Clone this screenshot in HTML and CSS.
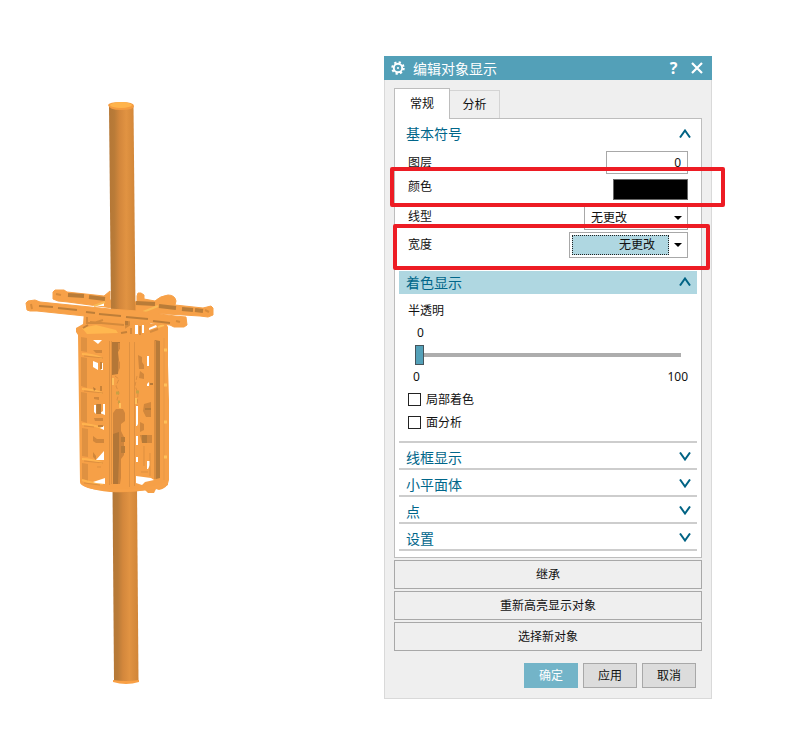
FILE: index.html
```html
<!DOCTYPE html>
<html lang="zh-CN">

<head>
    <meta charset="utf-8">
    <title>编辑对象显示</title>
    <link rel="stylesheet" href="styles.css">
</head>
<body>
    <div class="workspace">
        <div class="viewport">
            <svg class="model" viewBox="0 0 384 744" aria-hidden="true">
                <defs>
                    <linearGradient id="pole">
                        <stop offset="0" stop-color="#b47736"/>
                        <stop offset="0.2" stop-color="#b97b38"/>
                        <stop offset="0.4" stop-color="#d3873c"/>
                        <stop offset="0.65" stop-color="#e19342"/>
                        <stop offset="1" stop-color="#d08538"/>
                    </linearGradient>
                </defs>

                <!-- lower pole -->
                <path d="M112.5 486L137 486L138.5 681L114 681Z" fill="url(#pole)"/>
                <path d="M113 680Q126 682 139 680L139 682Q126 686 113 682Z" fill="#f9a045"/>

                <!-- back arm -->
                <path d="M55 290L64 290L67 292L104 296L110 291V300L137 302L137 296L138 293L141 293L144 295L144 299L155 301Q160 296 168 295Q175 295 176 301L175 305L203 308L211 306L213 308L213 315L208 317L200 316L150 313L68 302L58 301L53 299L53 292Z" fill="#f7a148" stroke="#f7a148"/>
                <path d="M68 295L84 296M89 297L105 299M136 303L155 304M159 306L176 308M182 309L193 310" stroke="#b97c38" stroke-width="4"/>
                <path d="M195 310L203 311" stroke="#bd7e39" stroke-width="4"/>
                <path d="M93 306L104 302V306Z" fill="#fff"/>
                <path d="M94 306L105 302M143 312L158 306" stroke="#f9bb55" stroke-width="2"/>

                <!-- cage shell -->
                <path d="M84 312L137 311L151 324L165 322L168 327V365L169 400V480Q168 488 159 490L156 489L154 493H148L145 490Q132 493 110 492Q83 489 80 482L78 335L76 332V328L83 324Z" fill="#f6a047"/>

                <!-- hub and top plates -->
                <path d="M82 328L96 325L116 330L118 333L87 334Z" fill="#ffb74f"/>
                <path d="M87 317V323L94 323L103 320M126 319V327L129 325V318M90 322L124 325" stroke="#d48a3c" stroke-width="2" fill="none"/>
                <path d="M125 319H128V325H125Z" fill="#b97b38"/>
                <path d="M83 328L88 325M121 333L127 332" stroke="#c58139" stroke-width="2"/>
                <path d="M135 325H138V334H135ZM142 325H144V333H142ZM149 328L156 325L157 327L149 330Z" fill="#fff"/>
                <path d="M140 326V335M150 332L158 329M131 328V334" stroke="#d68b3d" stroke-width="2"/>
                <path d="M158 327L164 325" stroke="#ffc05a" stroke-width="2"/>

                <!-- left wall panels -->
                <g fill="#df9141">
                    <path d="M81 337L87 338V352L81 351ZM81 357L87 358V388L81 386ZM81 392L87 393V423L81 421ZM82 428L88 429V457L82 456ZM82 463L88 464V482L82 479Z"/>
                    <path d="M109 341H110V485H109ZM129 342H130V487H129ZM111 341H112V484H111ZM134 342H135V486H134Z"/>
                </g>
                <g stroke="#ffb44f" stroke-width="2" fill="none">
                    <path d="M82 354Q91 354 102 358M82 389Q91 389 102 393M82 424Q90 424 102 428M82 459Q91 459 102 463M82 480Q91 483 103 484"/>
                </g>
                <path d="M84 356L103 358M84 391L103 393M84 426L94 427M84 461L103 463M84 483L100 485" stroke="#dc8f40" stroke-width="1"/>

                <!-- pole and fittings seen through the front -->
                <path d="M112 342H120V348L118 352L119 362L118 374L112 375Z" fill="#b47737"/>
                <path d="M118 343H120V348L118 351ZM118 360L120 362V368L118 372Z" fill="#d1863d"/>
                <path d="M113 413L116 409H123L125 413V421L121 424V431L124 437V455L121 459V478L120 484H113Z" fill="#cf853c"/>
                <path d="M113 434L119 432V456L118 484H113Z" fill="#b27637"/>
                <path d="M121 437H125V442H121ZM121 446H125V453H121Z" fill="#b87b38"/>
                <path d="M115 376L119 379L116 386L119 393L117 400L120 406M137 376L135 386L138 393L137 407" stroke="#dc8e3f" stroke-dasharray="4 2" fill="none"/>
                <path d="M116 393H119M136 392H139M118 402H120" stroke="#c8a044" stroke-width="3"/>
                <path d="M113 378V385M120 403V408M136 398V404" stroke="#ffc15c" stroke-width="2"/>

                <!-- openings in the cage -->
                <g fill="#fff">
                    <path d="M93 340H102L98 344ZM93 361L98 363V370L93 367ZM102 363H103V370H101Z"/>
                    <path d="M94 405H96V414L94 412ZM103 404H105V415L100 413L103 411Z"/>
                    <path d="M100 428L104 426V430ZM96 460L104 451V460ZM93 482L105 478V484L96 483Z"/>
                    <path d="M147 356H149V366H147ZM147 384L149 382V386H147Z"/>
                    <path d="M136 406H138V424L137 426H136ZM136 436H138V445H136ZM136 457H138V462H136ZM147 461H150V465L148 469H147Z"/>
                    <path d="M136 476L151 478L154 480L145 482L142 485L136 483Z"/>
                </g>

                <path d="M101 362V369M97 404V414M101 386V391M98 426H103" stroke="#c98339" stroke-width="2"/>
                <g fill="#d1873c">
                    <path d="M93 350H102V353H96ZM94 397H99V400L94 399ZM94 418H103V421H95ZM93 436L97 439H104V443H96L93 441ZM93 452L96 456V460L93 457Z"/>
                    <path d="M138 355L142 357V362L144 365V369H139ZM140 371L144 374V379L139 378ZM144 404L151 402V417H146L143 411ZM140 422L144 424V430L140 432ZM140 435H152V443H142Z"/>
                </g>
                <path d="M97 404H101V414H97ZM145 408H151V410H145ZM142 435H147V443H142ZM93 387L96 389L94 391Z" fill="#b67a38"/>
                <path d="M144 446V466M150 453V476M97 467H101M141 472H148" stroke="#dd8f40"/>
                <path d="M150 384H153" stroke="#b67a38" stroke-width="2"/>

                <!-- right wall -->
                <path d="M155 340L160 341V478L156 479Z" fill="#b77b39"/>
                <path d="M154 340L156 341V479H154Z" fill="#d98d3f"/>
                <path d="M164 338V480" stroke="#e89846"/>
                <path d="M164 350H167M164 385H167M164 422H167M164 457H167" stroke="#ffc05a" stroke-width="3"/>
                <path d="M80 482Q91 489 120 489Q154 489 168 480V485Q156 492 120 491Q85 491 80 483Z" fill="#f7a148"/>

                <!-- upper pole -->
                <path d="M109 106L133.5 106L135.5 311L111 311Z" fill="url(#pole)"/>
                <path d="M108 105Q109 102 121 102Q134 102 134 106Q134 110 121 110Q109 110 108 105Z" fill="#f59b3f"/>
                <ellipse cx="121" cy="105" rx="11" ry="3" fill="#ffb44c"/>

                <!-- front arm -->
                <path d="M28 301L35 300L40 302L110 309L137 311L175 316L186 317L187 325L184 327L174 327L170 325L85 316L37 311L30 311L27 310L26 303Z" fill="#f7a148" stroke="#f7a148"/>
                <path d="M39 306L53 307M58 308L77 310M86 312L95 313M99 314L121 316M126 317L148 319M153 321L170 323" stroke="#be7e38" stroke-width="2"/>
                <path d="M31 304L32 309M176 321L180 322M56 294L61 295M205 310L209 312" stroke="#d78b3b" stroke-width="2"/>
            </svg>
        </div>

        <form class="dialog">
            <div class="titlebar">
                <svg class="gear" viewBox="0 0 16 16" aria-hidden="true">
                    <circle cx="8" cy="8" r="6.5" fill="none" stroke="#fff" stroke-width="2.4" stroke-dasharray="2.55 2.55"/>
                    <circle cx="8" cy="8" r="4.8" fill="none" stroke="#fff" stroke-width="2.2"/>
                    <circle cx="8" cy="8" r="1.2" fill="#fff"/>
                </svg>
                <h1>编辑对象显示</h1>
                <button type="button" class="title-btn help" aria-label="帮助">?</button>
                <button type="button" class="title-btn" aria-label="关闭">
                    <svg width="12" height="12" viewBox="0 0 12 12"><path d="M1 1L11 11M11 1L1 11" stroke="#fff" stroke-width="2.2"/></svg>
                </button>
            </div>

            <div class="dialog-body">
                <div class="tabs">
                    <button type="button" class="tab active">常规</button>
                    <button type="button" class="tab">分析</button>
                </div>

                <div class="panel">
                    <button type="button" class="section">基本符号
                        <svg class="chevron" viewBox="0 0 12 9"><path d="M1 8.500L6 1.500L11 8.500"/></svg>
                    </button>
                    <div class="fields">
                        <div class="row">
                            <label for="layer">图层</label>
                            <input type="text" id="layer" class="layer" value="0">
                        </div>
                        <div class="row row-color">
                            <label for="color">颜色</label>
                            <button type="button" id="color" class="swatch"></button>
                            <span class="mark mark-color"></span>
                        </div>
                        <div class="row">
                            <label for="line">线型</label>
                            <div class="combo combo-line">
                                <select id="line"><option>无更改</option></select>
                                <span class="arrow"></span>
                            </div>
                        </div>
                        <div class="row row-width">
                            <label for="width">宽度</label>
                            <div class="combo combo-width">
                                <select id="width"><option>无更改</option></select>
                                <span class="arrow"></span>
                            </div>
                            <span class="mark mark-width"></span>
                        </div>
                    </div>

                    <button type="button" class="section selected">着色显示
                        <svg class="chevron" viewBox="0 0 12 9"><path d="M1 8.500L6 1.500L11 8.500"/></svg>
                    </button>
                    <div class="shading">
                        <label for="alpha">半透明</label>
                        <output for="alpha">0</output>
                        <input type="range" id="alpha" class="slider" min="0" max="100" value="0">
                        <div class="scale"><span>0</span><span>100</span></div>
                        <label class="check"><input type="checkbox">局部着色</label>
                        <label class="check"><input type="checkbox">面分析</label>
                    </div>

                    <button type="button" class="section closed">线框显示
                        <svg class="chevron" viewBox="0 0 12 9"><path d="M1 0.500L6 7.500L11 0.500"/></svg>
                    </button>
                    <button type="button" class="section closed">小平面体
                        <svg class="chevron" viewBox="0 0 12 9"><path d="M1 0.500L6 7.500L11 0.500"/></svg>
                    </button>
                    <button type="button" class="section closed">点
                        <svg class="chevron" viewBox="0 0 12 9"><path d="M1 0.500L6 7.500L11 0.500"/></svg>
                    </button>
                    <button type="button" class="section closed">设置
                        <svg class="chevron" viewBox="0 0 12 9"><path d="M1 0.500L6 7.500L11 0.500"/></svg>
                    </button>
                </div>

                <div class="actions">
                    <button type="button">继承</button>
                    <button type="button">重新高亮显示对象</button>
                    <button type="button">选择新对象</button>
                </div>
                <div class="footer">
                    <button type="submit" class="ok">确定</button>
                    <button type="button">应用</button>
                    <button type="button">取消</button>
                </div>
            </div>
        </form>
    </div>
</body>

</html>
```

FILE: styles.css
```css
* {
    margin: 0;
    box-sizing: border-box;
}

body {
    background-color: #fff;
    color: #111;
    font-family: "Noto Sans", "Noto Sans CJK SC", sans-serif;
    font-size: 12px;
    line-height: 18px;
}

button,
input,
select {
    font: inherit;
    color: inherit;
    border-radius: 0;
}

.workspace {
    display: flex;
    align-items: flex-start;
    padding-right: 78px;
}

.viewport {
    flex: 1;
    min-width: 0;
}

.model {
    display: block;
    width: 100%;
    max-width: 384px;
}

.dialog {
    flex: 0 0 328px;
    margin-top: 56px;
}

.titlebar {
    display: flex;
    align-items: center;
    height: 24px;
    padding: 0 9px 0 7px;
    background-color: #53a0b8;
    color: #fff;
}

.gear {
    width: 14px;
    height: 14px;
}

h1 {
    flex: 1;
    padding: 2px 0 0 8px;
    font-size: 14px;
    font-weight: 400;
}

.title-btn {
    display: flex;
    align-items: center;
    justify-content: center;
    width: 13px;
    margin-left: 10px;
    padding: 0;
    border: 0;
    background: none;
}

.help {
    font-size: 16px;
    font-weight: 700;
}

.dialog-body {
    padding: 8px 9px 10px;
    border: 1px solid #d9d9d9;
    border-top: 0;
    background-color: #efefef;
}

.tabs {
    display: flex;
    align-items: flex-end;
}

.tab {
    width: 50px;
    height: 28px;
    padding: 0;
    border: 1px solid #d4d4d4;
    border-bottom: 0;
    border-left: 0;
    background-color: #efefef;
}

.tab.active {
    z-index: 1;
    width: 56px;
    height: 31px;
    margin-bottom: -1px;
    border: 1px solid #bdbdbd;
    border-bottom: 0;
    background-color: #fff;
}

.panel {
    padding: 0 4px 6px;
    border: 1px solid #bdbdbd;
    background-color: #fff;
}

.section {
    display: flex;
    align-items: center;
    justify-content: space-between;
    width: 100%;
    height: 30px;
    padding: 0 6px 0 7px;
    border: 0;
    background: none;
    color: #00668a;
    font-size: 14px;
}

.section.selected {
    height: 23px;
    background-color: #afd7e1;
}

.section.closed {
    height: 27px;
    padding-top: 4px;
    border-bottom: 2px solid #cdcdcd;
}

.chevron {
    width: 12px;
    height: 9px;
    margin-bottom: 2px;
    fill: none;
    stroke: #006384;
    stroke-width: 2;
}

.fields {
    padding: 2px 9px 12px;
}

.row {
    position: relative;
    display: flex;
    align-items: flex-start;
    justify-content: space-between;
    height: 27px;
}

.row label {
    padding-top: 3px;
}

.row-color label {
    padding-top: 0;
}

.row-width label {
    padding-top: 4px;
}

.layer {
    width: 82px;
    height: 23px;
    padding: 0 6px;
    border: 1px solid #a8a8a8;
    text-align: right;
}

.swatch {
    width: 75px;
    height: 21px;
    margin-top: 1px;
    border: 1px solid #666;
    background-color: #000;
}

.combo {
    display: flex;
    align-items: center;
    height: 25px;
    border: 1px solid #a8a8a8;
    background-color: #fff;
}

.combo select {
    flex: 1;
    height: 100%;
    appearance: none;
    padding: 0 6px;
    border: 0;
    background: none;
    outline: 0;
}

.combo-line {
    width: 104px;
}

.combo-width {
    width: 119px;
    height: 26px;
    padding: 2px 0 2px 2px;
}

.combo-width select {
    padding: 0 13px;
    border: 1px dotted #222;
    background-color: #afd7e1;
    text-align: right;
    text-align-last: right;
}

.arrow {
    margin: 0 5px;
    border: 4px solid transparent;
    border-top-color: #000;
    border-bottom: 0;
}

/* highlight frames */
.mark {
    position: absolute;
    z-index: 1;
    border: 4px solid #ed1c24;
    border-radius: 2px;
    pointer-events: none;
}

.mark-color {
    top: -11px;
    right: -37px;
    left: -18px;
    height: 40px;
}

.mark-width {
    top: -8px;
    right: -22px;
    left: -15px;
    height: 46px;
}

.shading {
    display: flex;
    flex-direction: column;
    padding: 8px 9px 7px;
    border-bottom: 2px solid #cdcdcd;
}

.shading output {
    padding: 4px 9px 3px;
}

.slider {
    appearance: none;
    height: 20px;
    margin: 0 7px;
    background: linear-gradient(#adadad, #adadad) center / 100% 4px no-repeat;
}

.slider::-webkit-slider-thumb {
    appearance: none;
    width: 9px;
    height: 20px;
    border: 1px solid #45545b;
    background-color: #53a0b8;
}

.scale {
    display: flex;
    justify-content: space-between;
    padding: 3px 0 2px 5px;
}

.check {
    display: flex;
    align-items: center;
    gap: 5px;
    height: 23px;
}

.check input {
    appearance: none;
    width: 13px;
    height: 13px;
    border: 1px solid #222;
    background-color: #fff;
}

.actions {
    display: grid;
    gap: 2px;
    padding: 2px 0 12px;
}

.actions button,
.footer button {
    height: 29px;
    padding: 0;
    border: 1px solid #a8a8a8;
    background-color: #efefef;
}

.footer {
    display: flex;
    justify-content: flex-end;
    gap: 5px;
    padding-right: 6px;
}

.footer button {
    width: 54px;
    height: 25px;
    background-color: #dcdcdc;
}

.footer .ok {
    border-color: #73b4c8;
    background-color: #73b4c8;
    color: #fff;
}
```
